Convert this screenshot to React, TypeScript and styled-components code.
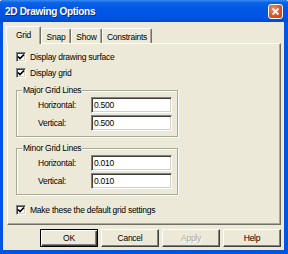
import React from "react";
import styled, { createGlobalStyle, css } from "styled-components";

const GlobalStyle = createGlobalStyle`
  html, body {
    margin: 0;
    padding: 0;
    background: #ffffff;
  }
  body {
    font-family: "Liberation Sans", Arial, sans-serif;
    font-size: 8.5px;
    letter-spacing: -0.25px;
    color: #000000;
  }
`;

const Window = styled.div`
  width: 288px;
  height: 254px;
  display: flex;
  flex-direction: column;
  background: #0054e3;
  border-radius: 3px 3px 0 0;
  overflow: hidden;
`;

const TitleBar = styled.div`
  height: 22px;
  flex: none;
  display: flex;
  align-items: center;
  justify-content: space-between;
  padding: 0 5px 0 5px;
  background: linear-gradient(
    to bottom,
    #3a8cf5 0%,
    #0b61e6 12%,
    #0056e5 45%,
    #0054e3 80%,
    #0349c9 100%
  );
`;

const Title = styled.span`
  color: #ffffff;
  font-weight: bold;
  font-size: 10px;
  letter-spacing: -0.3px;
  text-shadow: 1px 1px 0 #0b2a8c;
`;

const CloseButton = styled.div`
  width: 15px;
  height: 15px;
  box-sizing: border-box;
  border: 1px solid #ffffff;
  border-radius: 3px;
  background: radial-gradient(circle at 35% 30%, #f08a6a 0%, #e0512c 55%, #c8401c 100%);
  display: flex;
  align-items: center;
  justify-content: center;
`;

const Body = styled.div`
  flex: 1;
  margin: 0 4px 4px 3px;
  background: #ece9d8;
  display: flex;
  flex-direction: column;
`;

const TabStrip = styled.div`
  display: flex;
  align-items: flex-end;
  height: 17px;
  margin: 4px 0 0 3px;
`;

const Tab = styled.div<{ $active?: boolean; $w: number }>`
  position: relative;
  box-sizing: border-box;
  width: ${(p) => p.$w}px;
  height: 15px;
  display: flex;
  align-items: center;
  justify-content: center;
  background: #ece9d8;
  border-top: 1px solid #ffffff;
  border-left: 1px solid #ffffff;
  border-right: 1px solid #716f64;
  box-shadow: inset -1px 0 0 #aca899;
  border-radius: 2px 2px 0 0;
  padding-top: 1px;
  ${(p) =>
    p.$active &&
    css`
      height: 18px;
      margin-bottom: -1px;
      z-index: 1;
      padding-bottom: 2px;
    `}
`;

const Panel = styled.div`
  box-sizing: border-box;
  width: 274px;
  height: 182px;
  margin-left: 4px;
  border-top: 1px solid #ffffff;
  border-left: 1px solid #ffffff;
  border-right: 1px solid #716f64;
  border-bottom: 1px solid #716f64;
  box-shadow: inset -1px -1px 0 #aca899;
  padding: 8px 0 0 8px;
  display: flex;
  flex-direction: column;
`;

const CheckRow = styled.label<{ $top: number }>`
  display: flex;
  align-items: center;
  height: 10px;
  gap: 4px;
  margin-top: ${(p) => p.$top}px;
  white-space: nowrap;
`;

const Box = styled.span`
  flex: none;
  width: 10px;
  height: 10px;
  box-sizing: border-box;
  background: #ffffff;
  border-top: 1px solid #808080;
  border-left: 1px solid #808080;
  border-right: 1px solid #ffffff;
  border-bottom: 1px solid #ffffff;
  box-shadow: inset 1px 1px 0 #404040, inset -1px -1px 0 #d4d0c8;
  display: flex;
  align-items: center;
  justify-content: center;
`;

const Group = styled.div<{ $top: number }>`
  position: relative;
  box-sizing: border-box;
  width: 162px;
  height: 47px;
  margin-top: ${(p) => p.$top}px;
  border: 1px solid #aca899;
  box-shadow: inset 1px 1px 0 #ffffff, 1px 1px 0 #ffffff;
  padding: 6px 0 0 21px;
  display: flex;
  flex-direction: column;
  gap: 2px;
`;

const Legend = styled.span`
  position: absolute;
  top: -6px;
  left: 5px;
  padding: 0 1px;
  background: #ece9d8;
  line-height: 10px;
`;

const FieldRow = styled.div`
  display: flex;
  align-items: center;
  height: 16px;
`;

const FieldLabel = styled.span`
  width: 53px;
  flex: none;
`;

const Input = styled.div`
  box-sizing: border-box;
  width: 81px;
  height: 16px;
  background: #ffffff;
  border-top: 1px solid #808080;
  border-left: 1px solid #808080;
  border-right: 1px solid #ffffff;
  border-bottom: 1px solid #ffffff;
  box-shadow: inset 1px 1px 0 #404040, inset -1px -1px 0 #d4d0c8;
  padding: 0 0 0 2px;
  display: flex;
  align-items: center;
`;

const ButtonRow = styled.div`
  display: flex;
  justify-content: flex-end;
  gap: 3px;
  margin: 4px 3px 0 0;
`;

const Button = styled.div<{ $default?: boolean; $disabled?: boolean }>`
  box-sizing: border-box;
  width: 58px;
  height: 18px;
  display: flex;
  align-items: center;
  justify-content: center;
  background: #ece9d8;
  border-top: 1px solid #ffffff;
  border-left: 1px solid #ffffff;
  border-right: 1px solid #404040;
  border-bottom: 1px solid #404040;
  box-shadow: inset -1px -1px 0 #808080;
  color: ${(p) => (p.$disabled ? "#aca899" : "#000000")};
  text-shadow: ${(p) => (p.$disabled ? "1px 1px 0 #ffffff" : "none")};
  ${(p) =>
    p.$default &&
    css`
      border: 1px solid #000000;
      box-shadow: inset 1px 1px 0 #ffffff, inset -1px -1px 0 #404040,
        inset -2px -2px 0 #808080;
    `}
`;

const Check = () => (
  <svg width="8" height="8" viewBox="0 0 8 8">
    <path d="M1 3.5 L3 5.5 L7 1.5" fill="none" stroke="#000" strokeWidth="1.7" />
  </svg>
);

const CheckBox = ({ top, children }: { top: number; children: React.ReactNode }) => (
  <CheckRow $top={top}>
    <Box>
      <Check />
    </Box>
    <span>{children}</span>
  </CheckRow>
);

const GridGroup = ({
  top,
  title,
  h,
  v,
}: {
  top: number;
  title: string;
  h: string;
  v: string;
}) => (
  <Group $top={top}>
    <Legend>{title}</Legend>
    <FieldRow>
      <FieldLabel>Horizontal:</FieldLabel>
      <Input>{h}</Input>
    </FieldRow>
    <FieldRow>
      <FieldLabel>Vertical:</FieldLabel>
      <Input>{v}</Input>
    </FieldRow>
  </Group>
);

export default function App() {
  return (
    <>
      <GlobalStyle />
      <Window>
        <TitleBar>
          <Title>2D Drawing Options</Title>
          <CloseButton>
            <svg width="9" height="9" viewBox="0 0 9 9">
              <path d="M1.5 1.5 L7.5 7.5 M7.5 1.5 L1.5 7.5" stroke="#fff" strokeWidth="1.8" />
            </svg>
          </CloseButton>
        </TitleBar>
        <Body>
          <TabStrip>
            <Tab $active $w={35}>Grid</Tab>
            <Tab $w={30}>Snap</Tab>
            <Tab $w={31}>Show</Tab>
            <Tab $w={50}>Constraints</Tab>
          </TabStrip>
          <Panel>
            <CheckBox top={0}>Display drawing surface</CheckBox>
            <CheckBox top={6}>Display grid</CheckBox>
            <GridGroup top={12} title="Major Grid Lines" h="0.500" v="0.500" />
            <GridGroup top={11} title="Minor Grid Lines" h="0.010" v="0.010" />
            <CheckBox top={10}>Make these the default grid settings</CheckBox>
          </Panel>
          <ButtonRow>
            <Button $default>OK</Button>
            <Button>Cancel</Button>
            <Button $disabled>Apply</Button>
            <Button>Help</Button>
          </ButtonRow>
        </Body>
      </Window>
    </>
  );
}
